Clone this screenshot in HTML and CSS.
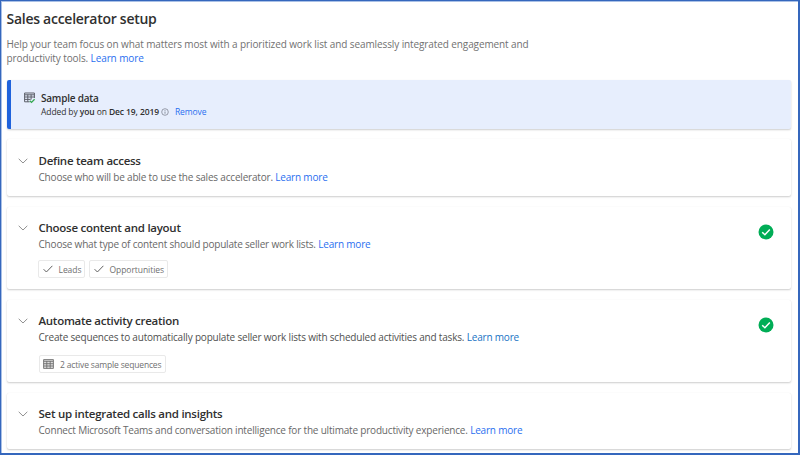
FILE: index.html
```html
<!DOCTYPE html>
<html lang="en">
<head>
<meta charset="utf-8">
<title>Sales accelerator setup</title>
<link rel="stylesheet" href="styles.css">
</head>
<body>
<svg class="defs" width="0" height="0" aria-hidden="true">
  <symbol id="chevron" viewBox="0 0 10 6"><path d="M.7.8 5 5 9.3.8" fill="none" stroke="currentColor" stroke-width=".9"/></symbol>
  <symbol id="tick" viewBox="0 0 10 8"><path d="M.6 4.2 3.4 7 9.4.8" fill="none" stroke="currentColor" stroke-width="1"/></symbol>
  <symbol id="table" viewBox="0 0 11 10"><path d="M.6.6h9.8v8.8H.6zM.6 2.3h9.8M.6 4.7h9.8M.6 7h9.8M3.8 2v7.4M7.2 2v7.4" fill="#ddd" stroke="currentColor" stroke-width=".9"/></symbol>
  <symbol id="done" viewBox="0 0 16 16"><circle cx="8" cy="8" r="7.5" fill="#00ad56"/><path d="M4.2 8.2 6.9 10.7 11.8 5.5" fill="none" stroke="#fff" stroke-width="1.5"/></symbol>
</svg>
<main class="page">
  <h1>Sales accelerator setup</h1>
  <p class="intro"><span class="intro-first">Help your team focus on what matters most with a prioritized work list and seamlessly integrated engagement and</span><br><span class="intro-second">productivity tools. <a>Learn more</a></span></p>

  <section class="notice">
    <svg class="notice-icon" viewBox="0 0 12 12"><path d="M.6 1h9.8v5M.6 1v8.8h5M.6 2.8h9.8M.6 5h9.8M.6 7.4h6M3.8 2.5v7.3M7.1 2.5v5" fill="none" stroke="#5c5f69"/><path d="M5.8 8.7 7.5 10.4 10.6 7.2" fill="none" stroke="#35a853" stroke-width="1.3"/></svg>
    <div>
      <h2>Sample data</h2>
      <p><span class="added">Added by <b>you</b> on <b>Dec 19, 2019</b></span><svg class="info" viewBox="0 0 8 8"><circle cx="4" cy="4" r="3.3" fill="none" stroke="#747985" stroke-width=".7"/><path d="M4 3.5v2.2M4 2.1v.8" stroke="#747985" stroke-width=".8"/></svg><a>Remove</a></p>
    </div>
  </section>

  <section class="card access">
    <svg class="chevron"><use href="#chevron"/></svg>
    <div class="body">
      <h2>Define team access</h2>
      <p>Choose who will be able to use the sales accelerator. <a>Learn more</a></p>
    </div>
  </section>

  <section class="card content">
    <svg class="chevron"><use href="#chevron"/></svg>
    <div class="body">
      <h2>Choose content and layout</h2>
      <p>Choose what type of content should populate seller work lists. <a>Learn more</a></p>
      <div class="chips">
        <span class="chip leads"><svg class="tick"><use href="#tick"/></svg><span>Leads</span></span>
        <span class="chip opportunities"><svg class="tick"><use href="#tick"/></svg><span>Opportunities</span></span>
      </div>
    </div>
    <svg class="done"><use href="#done"/></svg>
  </section>

  <section class="card automate">
    <svg class="chevron"><use href="#chevron"/></svg>
    <div class="body">
      <h2>Automate activity creation</h2>
      <p>Create sequences to automatically populate seller work lists with scheduled activities and tasks. <a>Learn more</a></p>
      <div class="chips">
        <span class="chip sequences"><svg class="table"><use href="#table"/></svg><span>2 active sample sequences</span></span>
      </div>
    </div>
    <svg class="done"><use href="#done"/></svg>
  </section>

  <section class="card calls">
    <svg class="chevron"><use href="#chevron"/></svg>
    <div class="body">
      <h2>Set up integrated calls and insights</h2>
      <p>Connect Microsoft Teams and conversation intelligence for the ultimate productivity experience. <a>Learn more</a></p>
    </div>
  </section>
</main>
</body>
</html>
```
FILE: styles.css
```css
* { box-sizing: border-box; }
body { margin: 0; font-family: "Open Sans", "Noto Sans", sans-serif; color: #303030; background: #fff; }
h1, h2, p { margin: 0; white-space: nowrap; }
h1, h2, b { font-weight: 600; }
svg { display: block; flex: none; }
.defs { position: absolute; }
a { color: #2a6ff0; }
.page { width: 800px; height: 455px; border: 1px solid #3567bd; border-width: 1px 2px 2px 1px; padding: 8px 7px 0 6px; overflow: hidden; box-shadow: inset 1px 1px #a9c0e6; }
h1 { font-size: 14px; line-height: 20px; letter-spacing: -.27px; margin-left: -.5px; }
.intro { margin-top: 8px; margin-left: -.5px; font-size: 10px; line-height: 14px; color: #717171; letter-spacing: -.105px; }
.notice { display: flex; height: 49px; margin-top: 15px; padding: 11px 0 0 13px; border-left: 4px solid #1f62dc; border-radius: 2px; background: #e7eefd; box-shadow: 0 1px 2px #0003; }
.notice-icon { width: 12px; height: 12px; margin: 1px 5px 0 0; }
.notice h2 { font-size: 10px; line-height: 14px; letter-spacing: -.22px; }
.notice p { display: flex; align-items: center; font-size: 8.5px; line-height: 14px; letter-spacing: -.1px; }
.info { width: 8px; height: 8px; margin: -1px 6px 0 2px; }
.card { display: flex; height: 57px; margin-top: 10px; padding: 13px 17px 0 11px; border-radius: 2px; background: #fff; box-shadow: 0 1px 2px #0003, 0 0 1px #0001; }
.chevron { width: 10px; height: 6px; margin: 6px 11px 0 -.5px; color: #858585; }
.body { flex: 1; }
.card h2 { font-size: 11.5px; line-height: 17px; letter-spacing: -.27px; }
.card p { font-size: 10px; line-height: 16px; color: #686868; letter-spacing: -.19px; }
.content, .automate { height: 82px; margin-top: 11px; padding-top: 12px; }
.calls { height: 56px; margin-top: 11px; padding-top: 12px; }
.automate p { color: #505050; }
.automate a { color: #1873c4; }
.done { width: 16px; height: 16px; margin-top: 5px; }
.chips { display: flex; gap: 4px; margin: 8px 0 0 -1px; }
.chip { display: flex; align-items: center; height: 18px; padding-left: 4px; border: 1px solid #e9e9e9; border-radius: 2px; font-size: 8.5px; letter-spacing: -.06px; color: #707070; white-space: nowrap; }
.leads { width: 47px; }
.opportunities { width: 79px; }
.sequences { width: 127px; padding-left: 3px; letter-spacing: -.16px; }
.tick { width: 10px; height: 8px; margin-right: 6px; color: #606060; }
.table { width: 11px; height: 10px; margin-right: 6px; color: #707070; }
.automate .chips { margin: 10px 0 0 .5px; }
```
